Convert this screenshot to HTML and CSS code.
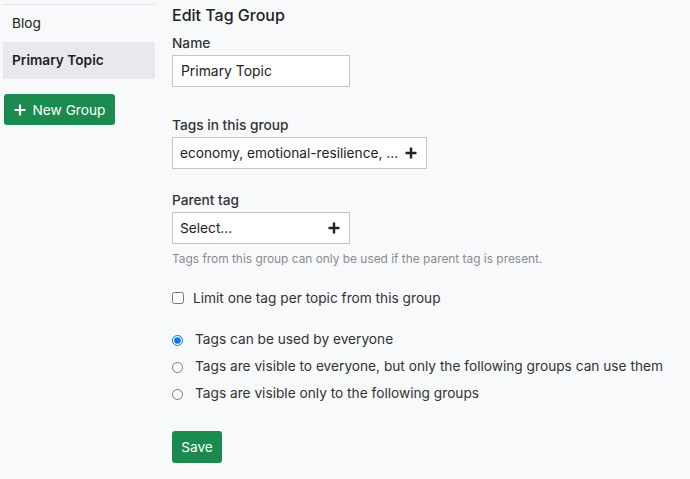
FILE: index.html
```html
<!DOCTYPE html>
<html lang="en">
  <head>
    <meta charset="UTF-8" />
    <title>Edit Tag Group</title>
    <link rel="stylesheet" href="styles.css">
  </head>
  <body>
    <div class="page">
      <div class="sidebar">
        <ul class="group_list">
          <li>Blog</li>
          <li class="active">Primary Topic</li>
        </ul>
        <button class="btn new_group">
          <svg width="12" height="12" viewBox="0 0 12 12"><path d="M6 0.5v11M0.5 6h11" stroke="#fff" stroke-width="2.2" /></svg>
          <span>New Group</span>
        </button>
      </div>

      <div class="main">
        <h2 class="title">Edit Tag Group</h2>

        <div class="field name_field">
          <label>Name</label>
          <input class="text_input" type="text" value="Primary Topic" />
        </div>

        <div class="field tags_field">
          <label>Tags in this group</label>
          <div class="chooser wide">
            <span>economy, emotional-resilience, ...</span>
            <svg width="12" height="12" viewBox="0 0 12 12"><path d="M6 0.5v11M0.5 6h11" stroke="#222" stroke-width="2.4" /></svg>
          </div>
        </div>

        <div class="field">
          <label>Parent tag</label>
          <div class="chooser">
            <span>Select...</span>
            <svg width="12" height="12" viewBox="0 0 12 12"><path d="M6 0.5v11M0.5 6h11" stroke="#222" stroke-width="2.4" /></svg>
          </div>
          <p class="help">Tags from this group can only be used if the parent tag is present.</p>
        </div>

        <label class="check_row">
          <input type="checkbox" />
          <span>Limit one tag per topic from this group</span>
        </label>

        <div class="radios">
          <label class="radio_row"><input type="radio" name="perm" checked /><span>Tags can be used by everyone</span></label>
          <label class="radio_row"><input type="radio" name="perm" /><span>Tags are visible to everyone, but only the following groups can use them</span></label>
          <label class="radio_row"><input type="radio" name="perm" /><span>Tags are visible only to the following groups</span></label>
        </div>

        <button class="btn save">Save</button>
      </div>
    </div>
  </body>
</html>
```

FILE: styles.css
```css
* {
  margin: 0;
  padding: 0;
  box-sizing: border-box;
}
body {
  background-color: #f8f9fb;
  color: #222;
  font-family: Inter, "Noto Sans", sans-serif;
  font-size: 13.7px;
}
.page {
  display: flex;
  padding: 4px 0 0 3px;
}
.sidebar {
  width: 152px;
  flex-shrink: 0;
}
.group_list {
  list-style: none;
  border-top: 1px solid #e3e4e8;
}
.group_list li {
  height: 37px;
  line-height: 36px;
  padding-left: 9px;
  color: #222;
}
.group_list li.active {
  background-color: #e9e9ed;
  font-weight: 600;
}
.btn {
  display: flex;
  align-items: center;
  justify-content: center;
  gap: 6px;
  border: none;
  border-radius: 3px;
  background-color: #1a8a4e;
  color: #fff;
  font-family: Inter, "Noto Sans", sans-serif;
  font-size: 13.7px;
  height: 32px;
  white-space: nowrap;
}
.new_group {
  margin: 15px 0 0 1px;
  width: 111px;
  height: 31px;
  gap: 7px;
}
.main {
  margin-left: 17px;
  padding-top: 1px;
}
.title {
  font-size: 16px;
  font-weight: 500;
  line-height: 20px;
  margin-bottom: 8px;
}
.field label {
  display: block;
  font-weight: 500;
  line-height: 20px;
  margin-bottom: 2px;
  color: #333;
}
.name_field {
  margin-bottom: 28px;
}
.tags_field {
  margin-bottom: 21px;
}
.text_input {
  width: 178px;
  height: 32px;
  border: 1px solid #c5c5c9;
  background-color: #fff;
  padding: 0 8px;
  font-family: Inter, "Noto Sans", sans-serif;
  font-size: 13.9px;
  color: #222;
}
.chooser {
  display: flex;
  align-items: center;
  justify-content: space-between;
  width: 178px;
  height: 32px;
  border: 1px solid #c5c5c9;
  background-color: #fff;
  padding: 0 9px 0 7px;
}
.chooser.wide {
  width: 255px;
}
.help {
  font-size: 11.9px;
  line-height: 15px;
  color: #8b8b8f;
  margin-top: 7px;
}
.check_row,
.radio_row {
  display: flex;
  align-items: center;
  color: #333;
}
.check_row {
  margin-top: 22px;
  height: 20px;
  gap: 9px;
}
.check_row input {
  width: 12px;
  height: 12px;
}
.radios {
  margin-top: 17px;
}
.radio_row {
  gap: 12px;
  height: 27px;
}
.radio_row input {
  width: 11px;
  height: 11px;
  margin-top: 4px;
}
.save {
  margin-top: 25px;
  width: 50px;
}
```
